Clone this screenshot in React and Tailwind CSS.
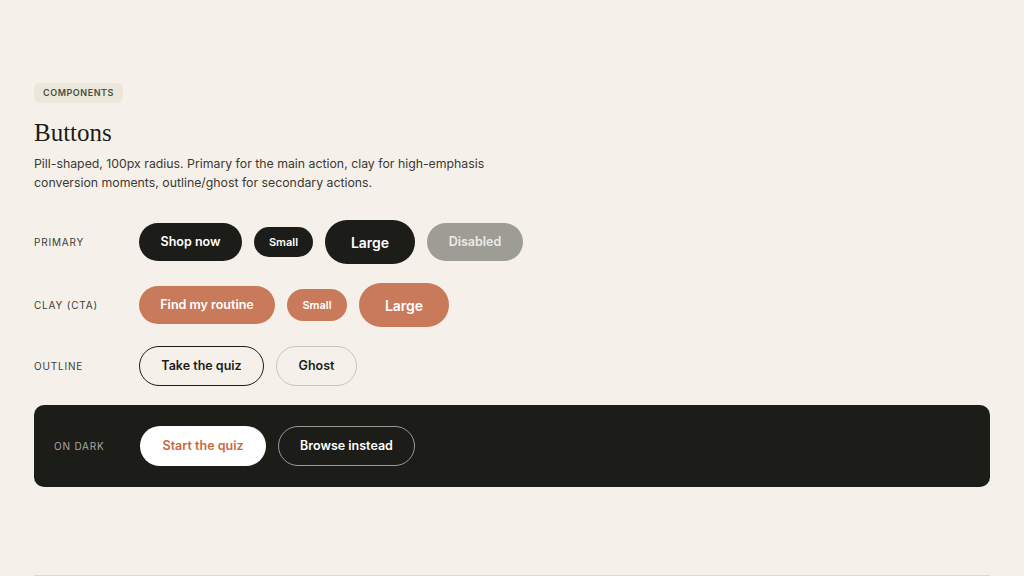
const pill = 'inline-flex items-center justify-center rounded-full font-semibold whitespace-nowrap';

function Row({ label, children }) {
  return (
    <div className="flex items-center">
      <div className="w-[105px] shrink-0 text-[10px] tracking-[0.08em] text-[#3d3c37]">{label}</div>
      <div className="flex items-center gap-3">{children}</div>
    </div>
  );
}

export default function App() {
  return (
    <div
      className="min-h-[576px] bg-[#f5f1ea] text-[#1c1c18] px-[34px] pt-[83px] overflow-hidden"
      style={{ fontFamily: 'Inter, "Noto Sans", sans-serif' }}
    >
      <div className="flex h-5 w-fit items-center rounded-md bg-[#ece7da] px-[9px] text-[9px] font-semibold tracking-[0.06em] text-[#44513c]">
        COMPONENTS
      </div>
      <h1
        className="mt-[15px] text-[25px] leading-[30px] text-[#1c1c18]"
        style={{ fontFamily: '"Liberation Serif", "DejaVu Serif", serif' }}
      >
        Buttons
      </h1>
      <p className="mt-[6px] max-w-[480px] text-[12.3px] leading-[19px] text-[#3a3934]">
        Pill-shaped, 100px radius. Primary for the main action, clay for high-emphasis conversion moments, outline/ghost for secondary actions.
      </p>

      <div className="mt-[28px] flex flex-col gap-[19px]">
        <Row label="PRIMARY">
          <button className={`${pill} h-[38px] w-[103px] bg-[#1c1c18] text-[12.5px] text-white`}>Shop now</button>
          <button className={`${pill} h-[30px] w-[59px] bg-[#1c1c18] text-[11px] text-white`}>Small</button>
          <button className={`${pill} h-[44px] w-[90px] bg-[#1c1c18] text-[14px] text-white`}>Large</button>
          <button className={`${pill} h-[38px] w-[96px] bg-[#9d9c95] text-[12.5px] text-[#ecebe6]`}>Disabled</button>
        </Row>
        <Row label="CLAY (CTA)">
          <button className={`${pill} h-[38px] w-[136px] bg-[#c97a5b] text-[12.5px] text-white`}>Find my routine</button>
          <button className={`${pill} h-[32px] w-[60px] bg-[#c97a5b] text-[11px] text-white`}>Small</button>
          <button className={`${pill} h-[44px] w-[90px] bg-[#c97a5b] text-[14px] text-white`}>Large</button>
        </Row>
        <Row label="OUTLINE">
          <button className={`${pill} h-[40px] w-[125px] border border-[#1c1c18] text-[12.5px] text-[#1c1c18]`}>Take the quiz</button>
          <button className={`${pill} h-[40px] w-[81px] border border-[#c9c5bc] text-[12.5px] text-[#1c1c18]`}>Ghost</button>
        </Row>
        <div className="flex h-[82px] items-center rounded-[10px] bg-[#1c1c18] px-5">
          <div className="w-[86px] shrink-0 text-[10px] tracking-[0.08em] text-[#a9a79f]">ON DARK</div>
          <div className="flex items-center gap-3">
            <button className={`${pill} h-[40px] w-[126px] bg-white text-[12.5px] text-[#c9683f]`}>Start the quiz</button>
            <button className={`${pill} h-[40px] w-[137px] border border-[#9c9a93] text-[12.5px] text-white`}>Browse instead</button>
          </div>
        </div>
      </div>

      <div className="mt-[88px] border-t border-[#dcd8d0]" />
    </div>
  );
}
